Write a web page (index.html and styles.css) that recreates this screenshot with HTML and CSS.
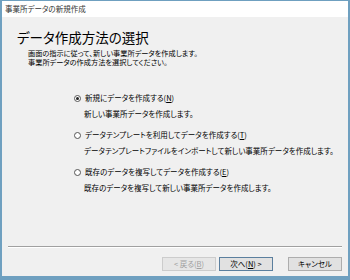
FILE: index.html
```html
<!DOCTYPE html>
<html lang="ja">
<head>
<meta charset="utf-8">
<link rel="stylesheet" href="styles.css">
</head>
<body>
<div class="window">
  <div class="titlebar">事業所データの新規作成</div>
  <div class="body">
    <div class="heading">データ作成方法の選択</div>
    <div class="desc">
      <div>画面の指示に従って、新しい事業所データを作成します。</div>
      <div>事業所データの作成方法を選択してください。</div>
    </div>
    <div class="options">
      <div class="option">
        <div class="label"><span class="radio checked"></span>新規にデータを作成する(<u>N</u>)</div>
        <div class="note">新しい事業所データを作成します。</div>
      </div>
      <div class="option">
        <div class="label"><span class="radio"></span>データテンプレートを利用してデータを作成する(<u>T</u>)</div>
        <div class="note">データテンプレートファイルをインポートして新しい事業所データを作成します。</div>
      </div>
      <div class="option">
        <div class="label"><span class="radio"></span>既存のデータを複写してデータを作成する(<u>E</u>)</div>
        <div class="note">既存のデータを複写して新しい事業所データを作成します。</div>
      </div>
    </div>
    <div class="spacer"></div>
    <div class="separator"></div>
    <div class="buttons">
      <div class="btn disabled">&lt; 戻る(<u>B</u>)</div>
      <div class="btn default">次へ(<u>N</u>) &gt;</div>
      <div class="btn cancel">キャンセル</div>
    </div>
  </div>
</div>
</body>
</html>
```
FILE: styles.css
```css
html, body {
  margin: 0;
  padding: 0;
  background: #6fa0c0;
}
.window {
  width: 350px;
  height: 280px;
  box-sizing: border-box;
  border-left: 2px solid #6fa0c0;
  border-right: 2px solid #6fa0c0;
  border-bottom: 4px solid #6fa0c0;
  border-top: 1px solid #6fa0c0;
  display: flex;
  flex-direction: column;
  font-family: "Noto Sans CJK JP", sans-serif;
  font-feature-settings: "palt";
  color: #000;
  white-space: nowrap;
}
.titlebar {
  height: 16px;
  background: #ffffff;
  font-size: 7.5px;
  line-height: 16px;
  padding-left: 3px;
  color: #333;
}
.body {
  flex: 1;
  background: #f0f0f0;
  display: flex;
  flex-direction: column;
}
.heading {
  margin-top: 12px;
  padding-left: 15px;
  font-size: 13.5px;
  line-height: 16px;
}
.desc {
  margin-top: 4px;
  padding-left: 26px;
  font-size: 7.2px;
  line-height: 9px;
}
.options {
  margin-top: 25px;
  padding-left: 72px;
  display: flex;
  flex-direction: column;
  gap: 10px;
}
.option {
  display: flex;
  flex-direction: column;
  gap: 5px;
}
.label {
  font-size: 7.5px;
  line-height: 12px;
  display: flex;
  align-items: center;
}
.note {
  font-size: 7.5px;
  line-height: 10px;
  padding-left: 10px;
}
.radio {
  width: 5px;
  height: 5px;
  border: 1px solid #555;
  border-radius: 50%;
  background: #fff;
  margin-right: 4px;
  position: relative;
}
.radio.checked::after {
  content: "";
  position: absolute;
  left: 1px;
  top: 1px;
  width: 3px;
  height: 3px;
  border-radius: 50%;
  background: #222;
}
.spacer {
  flex: 1;
}
.separator {
  margin: 0 6px 0 6px;
  border-top: 1px solid #a0a0a0;
  border-bottom: 1px solid #ffffff;
}
.buttons {
  display: flex;
  justify-content: flex-end;
  padding: 9px 6px 5px 0;
  gap: 3px;
}
.btn {
  width: 54px;
  height: 14px;
  box-sizing: border-box;
  border: 1px solid #adadad;
  background: #e1e1e1;
  font-size: 7.5px;
  line-height: 12px;
  text-align: center;
}
.btn.disabled {
  color: #a0a0a0;
  border-color: #cccccc;
  background: #e6e6e6;
}
.btn.default {
  border-color: #5b7f9e;
}
.btn.cancel {
  margin-left: 12px;
}
u {
  text-decoration: underline;
}
```
